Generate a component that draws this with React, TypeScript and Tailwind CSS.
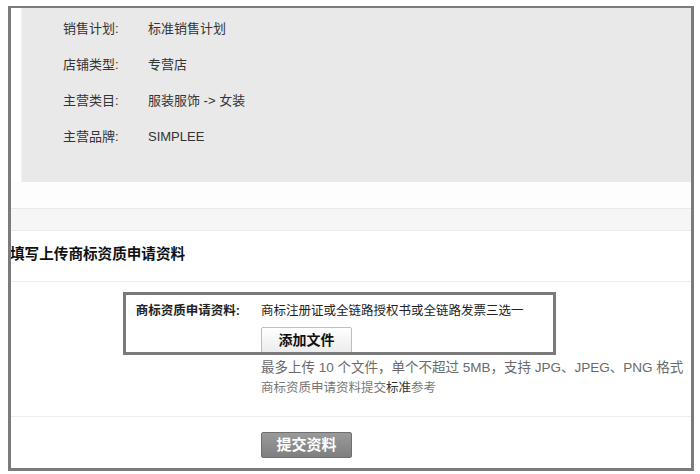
const font = "font-['Liberation_Sans','Noto_Sans_CJK_SC',sans-serif]"

const shopInfo = [
  { label: "销售计划:", value: "标准销售计划" },
  { label: "店铺类型:", value: "专营店" },
  { label: "主营类目:", value: "服装服饰 -> 女装" },
  { label: "主营品牌:", value: "SIMPLEE" },
]

export default function App() {
  return (
    <div className={`w-[700px] h-[474px] bg-white pt-[6px] pl-[8px] text-[#333] ${font}`}>
      <div className="w-[686px] h-[465px] border-[3px] border-t-2 border-[#7b7b7b] flex flex-col overflow-hidden">
        {/* shop summary */}
        <div className="ml-[10px] h-[174px] bg-[#e9e9e9] border-l border-[#f2f2f2] pl-[41px] pt-[3px]">
          {shopInfo.map((row) => (
            <div key={row.label} className="flex h-[36px] items-center text-[13px] leading-[16px]">
              <span className="w-[85px]">{row.label}</span>
              <span>{row.value}</span>
            </div>
          ))}
        </div>

        <div className="h-[26px] bg-[#fdfdfd]" />
        <div className="h-[23px] bg-[#f6f6f6] border-y border-[#e9e9e9]" />

        {/* section title */}
        <div className="h-[51px] flex items-center pb-[5px] border-b border-[#ececec]">
          <h3 className="text-[14.6px] font-bold leading-[18px] text-[#111] -ml-[1px]">
            填写上传商标资质申请资料
          </h3>
        </div>

        {/* upload form */}
        <div className="relative h-[135px] border-b border-[#ececec]">
          <div className="flex pt-[20px]">
            <div className="w-[250px] pr-[21px] text-right text-[12.5px] font-bold leading-[18px] text-[#222]">
              商标资质申请资料:
            </div>
            <div className="flex flex-col">
              <p className="text-[12.5px] leading-[18px] text-[#222]">商标注册证或全链路授权书或全链路发票三选一</p>
              <button className="mt-[7px] w-[91px] h-[26px] rounded-[2px] border border-[#bdbdbd] bg-gradient-to-b from-white to-[#ececec] text-[14px] font-bold text-[#111]">
                添加文件
              </button>
              <p className="mt-[5px] text-[13.5px] leading-[20px] text-[#6a6a6a] whitespace-nowrap">
                最多上传 10 个文件，单个不超过 5MB，支持 JPG、JPEG、PNG 格式
              </p>
              <p className="text-[12.5px] leading-[20px] text-[#777]">
                商标资质申请资料提交<span className="text-[#333]">标准</span>参考
              </p>
            </div>
          </div>
          {/* highlight frame */}
          <div className="absolute left-[112px] top-[10px] w-[433px] h-[63px] border-[3px] border-[#7a7a7a] pointer-events-none" />
        </div>

        {/* submit */}
        <div className="pl-[250px] pt-[15px]">
          <button className="w-[91px] h-[26px] rounded-[2px] border border-[#6f6f6f] bg-gradient-to-b from-[#9a9a9a] to-[#7f7f7f] text-[15px] font-bold text-white">
            提交资料
          </button>
        </div>
      </div>
    </div>
  )
}
